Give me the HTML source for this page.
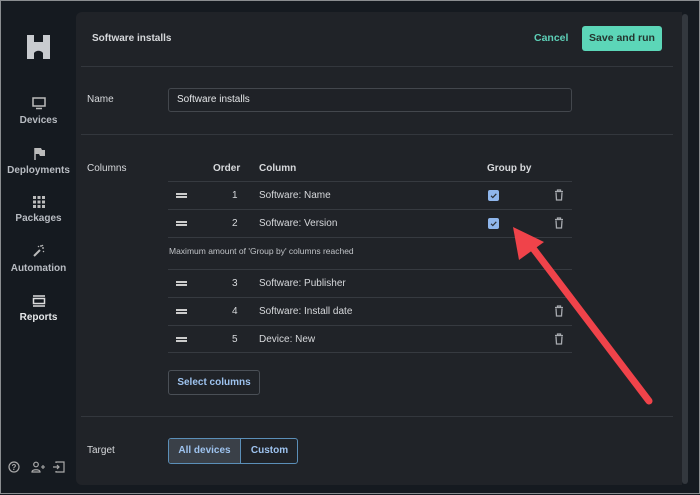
<!DOCTYPE html><html><head><style>
*{box-sizing:border-box;margin:0;padding:0}
body{width:700px;height:494px;background:#151a20;font-family:"Liberation Sans",sans-serif;position:relative;overflow:hidden;border:1px solid #8a8d90}
.a{position:absolute}
.side{left:0;top:0;width:75px;height:494px;text-align:center;color:#b8bcc2;font-size:10px;font-weight:bold}
.nav{position:absolute;left:0;width:75px;text-align:center}
.nav svg{display:block;margin:0 auto 5px}
.panel{left:75px;top:11px;width:606px;height:473px;background:#202328;border-radius:6px 0 0 6px}
.hr{position:absolute;height:1px;background:#33373d}
.t{position:absolute;color:#d7d9dc;font-size:10px}
.b{font-weight:bold}
.row{position:absolute;left:167px;width:404px;height:28px;border-top:1px solid #363a40}
.drag{position:absolute;left:8px;top:11px;width:11px;height:5px;border-top:2px solid #ccc;border-bottom:2px solid #ccc}
.cb{position:absolute;left:320px;top:8px;width:11px;height:11px;background:#8fb6ec;border-radius:2px}
.tr{position:absolute;left:386px;top:7px}
</style></head><body>
<svg width="0" height="0" style="position:absolute"><defs>
<symbol id="trash" viewBox="0 0 10 12"><path d="M1 2.5h8M3.5 2.5V1h3v1.5M2 3.5l.5 7.5h5l.5-7.5" fill="none" stroke="#a8abb0" stroke-width="1.3"/></symbol>
<symbol id="chk" viewBox="0 0 11 11"><path d="M3 5.8l1.8 1.7L8.3 3.8" fill="none" stroke="#2a2f36" stroke-width="1.2"/></symbol>
</defs></svg>
<div class="a side">
<svg class="a" style="left:26px;top:34px" width="23" height="24" viewBox="0 0 23 24"><path d="M0 0h7v7h9V0h7v24h-7v-6c-2-3-7-3-9 0v6H0z" fill="#c8cbcf"/></svg>
<div class="nav" style="top:96px"><svg width="14" height="13" viewBox="0 0 14 13"><rect x="1" y="1" width="12" height="8" fill="none" stroke="#bbb" stroke-width="1.5"/><path d="M4 11.5h6" stroke="#bbb" stroke-width="1.5"/></svg>Devices</div>
<div class="nav" style="top:146px"><svg width="12" height="13" viewBox="0 0 12 13"><path d="M2 1v12" stroke="#bbb" stroke-width="1.5"/><path d="M2 1h6l1 2h3v6H7L6 7H2z" fill="#bbb"/></svg>Deployments</div>
<div class="nav" style="top:195px"><svg width="12" height="12" viewBox="0 0 12 12" fill="#bbb"><rect x="0" y="0" width="3" height="3"/><rect x="4.5" y="0" width="3" height="3"/><rect x="9" y="0" width="3" height="3"/><rect x="0" y="4.5" width="3" height="3"/><rect x="4.5" y="4.5" width="3" height="3"/><rect x="9" y="4.5" width="3" height="3"/><rect x="0" y="9" width="3" height="3"/><rect x="4.5" y="9" width="3" height="3"/><rect x="9" y="9" width="3" height="3"/></svg>Packages</div>
<div class="nav" style="top:243px"><svg width="14" height="14" viewBox="0 0 14 14"><path d="M2 12L8 6" stroke="#bbb" stroke-width="2"/><path d="M9 1v2M12 4h-2M12 8l-1-1M6 2l1 1M11 1l-1 1" stroke="#bbb" stroke-width="1.2"/></svg>Automation</div>
<div class="nav" style="top:294px;color:#e6e8ea"><svg width="14" height="12" viewBox="0 0 14 12"><path d="M1 1h12M1 11h12" stroke="#ddd" stroke-width="1.5"/><rect x="1.5" y="3.5" width="11" height="5" fill="none" stroke="#ddd" stroke-width="1.5"/></svg>Reports</div>
<svg class="a" style="left:7px;top:459px" width="62" height="14" viewBox="0 0 62 14"><circle cx="6" cy="7" r="5" fill="none" stroke="#aaa" stroke-width="1.2"/><text x="6" y="10" font-size="8" fill="#aaa" text-anchor="middle" font-family="Liberation Sans">?</text><circle cx="28" cy="4.5" r="2.3" fill="none" stroke="#aaa" stroke-width="1.2"/><path d="M24 12c0-3 8-3 8 0z" fill="none" stroke="#aaa" stroke-width="1.2"/><path d="M33 7h4M35 5v4" stroke="#aaa" stroke-width="1.1"/><path d="M48 3V2h8v10h-8v-1M45 7h6M49 5l2 2-2 2" fill="none" stroke="#aaa" stroke-width="1.2"/></svg>
</div>
<div class="a panel"></div>
<div class="a" style="left:681px;top:13px;width:6px;height:470px;background:#33383e;border-radius:3px"></div>
<div class="t b" style="left:91px;top:32px">Software installs</div>
<div class="t b" style="left:533px;top:31px;color:#5dcfb7;font-size:10.5px">Cancel</div>
<div class="a" style="left:581px;top:25px;width:80px;height:25px;background:#5cd6b8;border-radius:3px;color:#24352f;font-size:10.5px;font-weight:bold;text-align:center;line-height:25px">Save and run</div>
<div class="hr" style="left:80px;top:65px;width:592px"></div>
<div class="t" style="left:86px;top:93px">Name</div>
<div class="a" style="left:167px;top:87px;width:404px;height:24px;border:1px solid #43474d;border-radius:3px;background:#1f2227"></div>
<div class="t" style="left:176px;top:93px;color:#e4e6e8">Software installs</div>
<div class="hr" style="left:80px;top:133px;width:592px"></div>
<div class="t" style="left:86px;top:162px">Columns</div>
<div class="t b" style="left:212px;top:162px">Order</div>
<div class="t b" style="left:258px;top:162px">Column</div>
<div class="t b" style="left:486px;top:162px">Group by</div>
<div class="row" style="top:180px"><div class="drag"></div><div class="t" style="left:64px;top:8px">1</div><div class="t" style="left:91px;top:8px">Software: Name</div><svg class="cb"><use href="#chk"/></svg><svg class="tr" width="10" height="12"><use href="#trash"/></svg></div>
<div class="row" style="top:208px"><div class="drag"></div><div class="t" style="left:64px;top:8px">2</div><div class="t" style="left:91px;top:8px">Software: Version</div><svg class="cb"><use href="#chk"/></svg><svg class="tr" width="10" height="12"><use href="#trash"/></svg></div>
<div class="row" style="top:236px;height:32px"><div class="t" style="left:1px;top:8px;font-size:8.5px;color:#c0c3c7">Maximum amount of 'Group by' columns reached</div></div>
<div class="row" style="top:268px"><div class="drag"></div><div class="t" style="left:64px;top:8px">3</div><div class="t" style="left:91px;top:8px">Software: Publisher</div></div>
<div class="row" style="top:296px"><div class="drag"></div><div class="t" style="left:64px;top:8px">4</div><div class="t" style="left:91px;top:8px">Software: Install date</div><svg class="tr" width="10" height="12"><use href="#trash"/></svg></div>
<div class="row" style="top:324px;border-bottom:1px solid #363a40"><div class="drag"></div><div class="t" style="left:64px;top:8px">5</div><div class="t" style="left:91px;top:8px">Device: New</div><svg class="tr" width="10" height="12"><use href="#trash"/></svg></div>
<div class="a" style="left:167px;top:369px;width:92px;height:25px;border:1px solid #4a4f56;border-radius:3px;color:#9ec3ef;font-size:10px;font-weight:bold;text-align:center;line-height:23px">Select columns</div>
<div class="hr" style="left:80px;top:415px;width:592px"></div>
<div class="t" style="left:86px;top:444px">Target</div>
<div class="a" style="left:167px;top:437px;width:130px;height:26px;border:1px solid #5b8fb8;border-radius:3px;overflow:hidden;font-size:10px;font-weight:bold;color:#9ec3ef">
<div class="a" style="left:0;top:0;width:72px;height:24px;background:#3a4048;text-align:center;line-height:24px;border-right:1px solid #5b8fb8">All devices</div>
<div class="a" style="left:72px;top:0;width:57px;height:24px;text-align:center;line-height:24px">Custom</div></div>
<svg class="a" style="left:0;top:0" width="700" height="494"><line x1="648" y1="400" x2="525" y2="238" stroke="#f0434a" stroke-width="7" stroke-linecap="round"/><polygon points="512,226 543,241 518,259" fill="#f0434a"/></svg>
</body></html>
